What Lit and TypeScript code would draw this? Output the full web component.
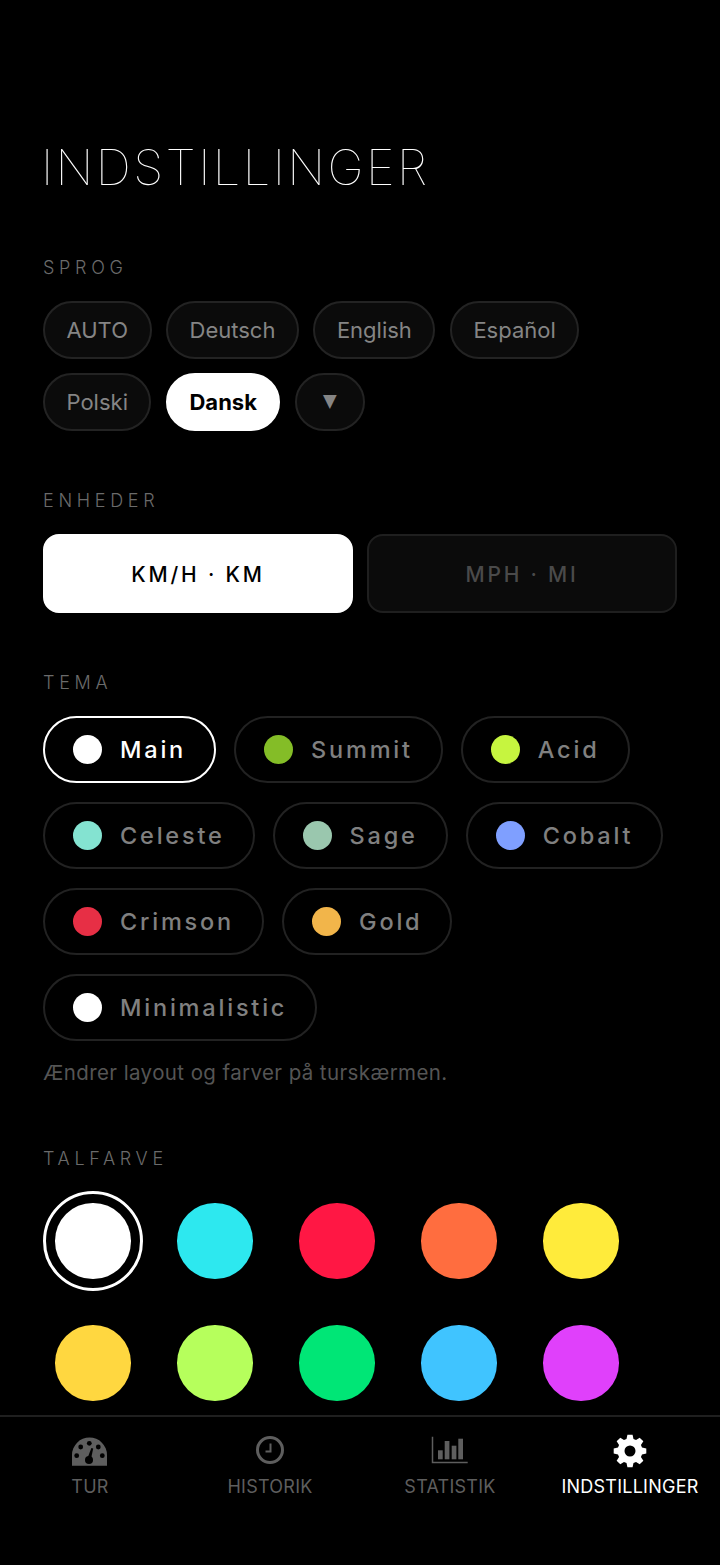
import { LitElement, html, css, svg } from "lit";
import { customElement } from "lit/decorators.js";

const LANGS = [
  { t: "AUTO" }, { t: "Deutsch" }, { t: "English" }, { t: "Español" },
  { t: "Polski" }, { t: "Dansk", on: true },
];
const THEMES = [
  ["Main", "#ffffff", true], ["Summit", "#84bd27"], ["Acid", "#c6f53f"],
  ["Celeste", "#84e3d1"], ["Sage", "#9ac7ae"], ["Cobalt", "#7f9fff"],
  ["Crimson", "#e72f45"], ["Gold", "#f2b54a"], ["Minimalistic", "#ffffff"],
] as [string, string, boolean?][];
const SWATCHES = [
  "#ffffff", "#2de8ef", "#ff1744", "#ff6d3f", "#ffeb3b",
  "#ffd740", "#b6ff5c", "#00e676", "#40c4ff", "#e040fb",
];

function gearPath(): string {
  const cx = 20, cy = 20, ro = 16.5, ri = 12.5, n = 8;
  const step = (Math.PI * 2) / n;
  const pts: string[] = [];
  for (let i = 0; i < n; i++) {
    const a = -Math.PI / 2 + i * step;
    const seq: [number, number][] = [
      [ri, a - step * 0.36], [ro, a - step * 0.2], [ro, a + step * 0.2], [ri, a + step * 0.36],
    ];
    for (const [r, t] of seq) pts.push(`${(cx + r * Math.cos(t)).toFixed(2)} ${(cy + r * Math.sin(t)).toFixed(2)}`);
  }
  return `M${pts.join("L")}ZM${cx - 5.5} ${cy}a5.5 5.5 0 1 0 11 0a5.5 5.5 0 1 0 -11 0Z`;
}

const gaugeIcon = svg`
  <path fill="currentColor" d="M2 34.7V24A17.5 17.5 0 0 1 37 24V34.7Z"/>
  <g fill="#000">
    <circle cx="19.3" cy="12.3" r="2.4"/><circle cx="10.7" cy="16" r="2.4"/>
    <circle cx="28.3" cy="16" r="2.4"/><circle cx="6.7" cy="24.7" r="2.4"/>
    <circle cx="32.3" cy="24.7" r="2.4"/><circle cx="19" cy="29" r="4"/>
    <path d="M17.5 27L21.4 17L23.2 17.5L21 28Z"/>
  </g>`;
const clockIcon = svg`
  <circle cx="20" cy="19" r="12.5" fill="none" stroke="currentColor" stroke-width="3"/>
  <path d="M20.5 12.5V20.5H15.5" fill="none" stroke="currentColor" stroke-width="2"/>`;
const statsIcon = svg`
  <path d="M2.5 5.7V31.5H37.7" fill="none" stroke="currentColor" stroke-width="1.5"/>
  <g fill="currentColor">
    <rect x="8" y="19.3" width="4.7" height="9"/><rect x="14.7" y="10" width="4.7" height="18.3"/>
    <rect x="21.7" y="14.7" width="4.7" height="13.6"/><rect x="28.3" y="7.7" width="4.7" height="20.6"/>
  </g>`;
const gearIcon = svg`<path fill="currentColor" fill-rule="evenodd" d=${gearPath()}/>`;

const NAV = [
  ["TUR", gaugeIcon], ["HISTORIK", clockIcon], ["STATISTIK", statsIcon], ["INDSTILLINGER", gearIcon, true],
] as [string, unknown, boolean?][];

@customElement("app-root")
export class AppRoot extends LitElement {
  static styles = css`
    :host {
      display: flex; flex-direction: column; width: 720px; height: 1565px; overflow: hidden;
      background: #000; color: #fff; font-family: Inter, "Noto Sans", sans-serif;
    }
    main { flex: 1; min-height: 0; overflow: hidden; padding: 141px 43px 0; box-sizing: border-box; }
    h1 { margin: 0 0 62px -2px; font-size: 49px; line-height: 54px; font-weight: 100; letter-spacing: 2.4px; color: #fff; will-change: transform; }
    .label { font-size: 18px; line-height: 22px; letter-spacing: 4.7px; color: #6b6b6b; font-weight: 300; margin: 0 0 22px; }
    .pills { display: flex; flex-wrap: wrap; gap: 14px 14.5px; margin-bottom: 59px; }
    .pill {
      box-sizing: border-box; height: 58px; padding: 0 21.5px; border-radius: 29px; display: flex; align-items: center;
      background: #0b0b0b; border: 2px solid #232323; color: #858585; font-size: 22px; font-weight: 400;
    }
    .pill.on { background: #fff; border-color: #fff; color: #000; font-weight: 700; }
    .arrow { width: 70px; padding: 0; justify-content: center; font-size: 15px; }
    .arrow span { display: inline-block; transform: scaleY(1.2); }
    .units { display: grid; grid-template-columns: 310px 310px; gap: 14px; margin-bottom: 59px; }
    .unit {
      box-sizing: border-box; height: 79px; padding-top: 2px; border-radius: 16px; display: flex; align-items: center; justify-content: center;
      background: #0b0b0b; border: 2px solid #1f1f1f; color: #4a4a4a; font-size: 21px; font-weight: 500; letter-spacing: 2.8px;
    }
    .unit.on { background: #fff; border-color: #fff; color: #000; }
    .themes { display: flex; flex-wrap: wrap; gap: 19px 18px; }
    .theme {
      box-sizing: border-box; height: 67px; padding: 0 28px; border-radius: 34px; display: flex; align-items: center; gap: 18px;
      border: 2px solid #222; color: #808080; font-size: 23.5px; font-weight: 500; letter-spacing: 2.8px;
    }
    .theme.on { border-color: #fff; color: #fff; }
    .dot { width: 29px; height: 29px; border-radius: 50%; flex: none; }
    .hint { margin: 19px 0 62px; font-size: 20.5px; line-height: 26px; color: #555; font-weight: 400; letter-spacing: 0.4px; }
    .swatches { display: grid; grid-template-columns: repeat(5, 100px); gap: 22px; margin-top: -1px; }
    .cell { width: 100px; height: 100px; box-sizing: border-box; border-radius: 50%; display: flex; align-items: center; justify-content: center; border: 3px solid transparent; }
    .cell.on { border-color: #fff; }
    .swatch { width: 75.5px; height: 75.5px; border-radius: 50%; }
    nav { height: 150px; flex: none; box-sizing: border-box; border-top: 2px solid #1f1f1f; display: grid; grid-template-columns: repeat(4, 180px); background: #000; }
    .tab { display: flex; flex-direction: column; align-items: center; padding-top: 14px; color: #5e5e5e; font-size: 18px; line-height: 22px; letter-spacing: 0.25px; white-space: nowrap; }
    .tab.on { color: #fff; }
    .tab svg { width: 40px; height: 40px; display: block; margin-bottom: 5px; }
  `;

  render() {
    return html`
      <main>
        <h1>INDSTILLINGER</h1>
        <div class="label">SPROG</div>
        <div class="pills">
          ${LANGS.map((l) => html`<div class="pill ${l.on ? "on" : ""}">${l.t}</div>`)}
          <div class="pill arrow"><span>▼</span></div>
        </div>
        <div class="label">ENHEDER</div>
        <div class="units">
          <div class="unit on">KM/H · KM</div>
          <div class="unit">MPH · MI</div>
        </div>
        <div class="label">TEMA</div>
        <div class="themes">
          ${THEMES.map(([n, c, on]) => html`<div class="theme ${on ? "on" : ""}"><span class="dot" style="background:${c}"></span>${n}</div>`)}
        </div>
        <p class="hint">Ændrer layout og farver på turskærmen.</p>
        <div class="label">TALFARVE</div>
        <div class="swatches">
          ${SWATCHES.map((c, i) => html`<div class="cell ${i === 0 ? "on" : ""}"><div class="swatch" style="background:${c}"></div></div>`)}
        </div>
      </main>
      <nav>
        ${NAV.map(([t, ic, on]) => html`<div class="tab ${on ? "on" : ""}"><svg viewBox="0 0 40 40">${ic}</svg>${t}</div>`)}
      </nav>
    `;
  }
}
